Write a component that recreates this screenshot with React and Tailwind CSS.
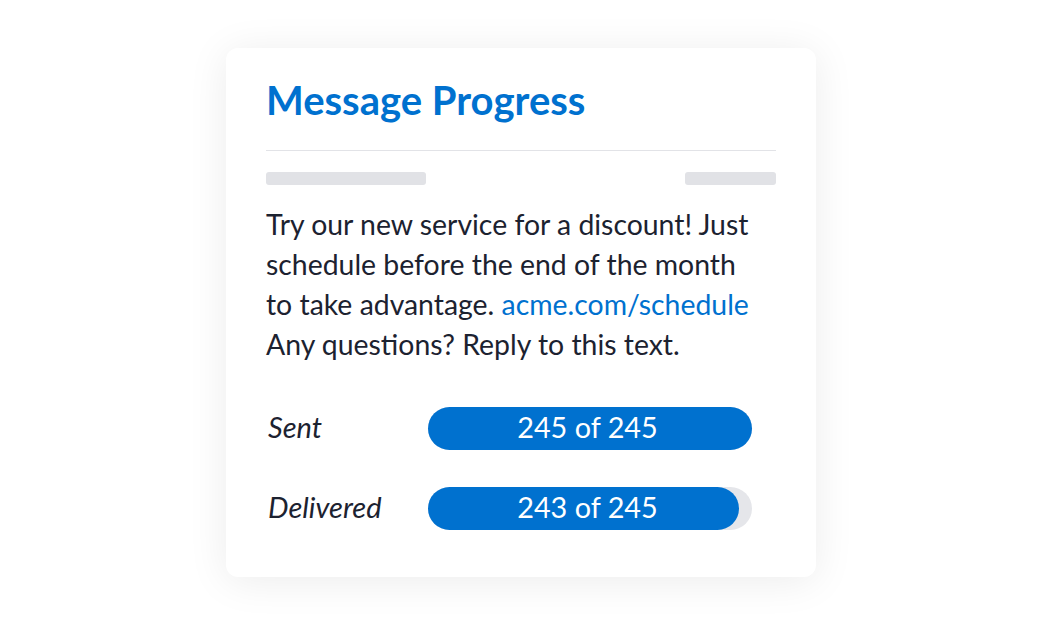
export default function App() {
  const rows = [
    { label: "Sent", value: 245, total: 245, pct: 100 },
    { label: "Delivered", value: 243, total: 245, pct: 96 },
  ];

  return (
    <div className="min-h-screen w-full bg-white flex items-center justify-center font-['Lato',sans-serif]">
      <div className="w-[590px] h-[529px] bg-white rounded-xl shadow-[0_4px_40px_rgba(0,0,0,0.08)] px-10 pt-[28px]">
        <h1 className="text-[40px] leading-[48px] font-bold text-[#0071cf]">
          Message Progress
        </h1>

        <div className="mt-[26px] h-px bg-[#e2e3e7]" />

        <div className="mt-[21px] flex justify-between">
          <div className="w-[160px] h-[13px] rounded-[3px] bg-[#e1e2e6]" />
          <div className="w-[91px] h-[13px] rounded-[3px] bg-[#e1e2e6]" />
        </div>

        <p className="mt-[19px] text-[28.4px] leading-[40px] text-[#1c2230]">
          Try our new service for a discount! Just
          <br />
          schedule before the end of the month
          <br />
          to take advantage.{" "}
          <span className="text-[#0071cf]">acme.com/schedule</span>
          <br />
          Any questions? Reply to this text.
        </p>

        <div className="mt-[43px] flex flex-col gap-[37px]">
          {rows.map((r) => (
            <div key={r.label} className="flex h-[43px]">
              <div className="w-[162px] pl-[2px] text-[29px] leading-[39px] italic text-[#1c2230]">
                {r.label}
              </div>
              <div className="relative w-[324px] h-[43px] rounded-full bg-[#e5e6ea]">
                <div
                  className="h-full rounded-full bg-[#0071cf]"
                  style={{ width: r.pct + "%" }}
                />
                <div className="absolute inset-0 pr-[5px] pb-[3px] flex items-center justify-center text-[28.8px] leading-[40px] text-white">
                  {r.value} of {r.total}
                </div>
              </div>
            </div>
          ))}
        </div>
      </div>
    </div>
  );
}
